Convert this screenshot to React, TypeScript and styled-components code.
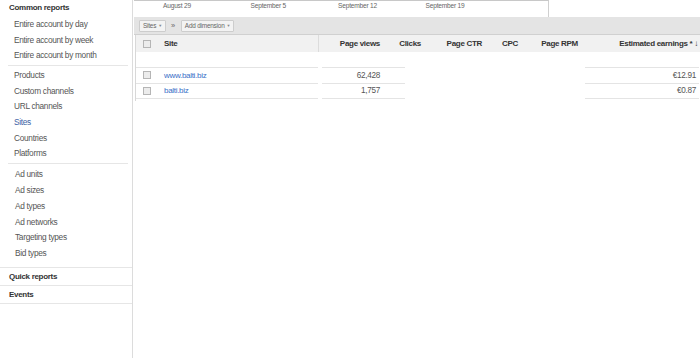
import styled, { createGlobalStyle } from "styled-components";

const GlobalStyle = createGlobalStyle`
  html, body {
    margin: 0;
    padding: 0;
    background: #fff;
  }
  body {
    font-family: "Liberation Sans", Arial, sans-serif;
    font-size: 8.3px;
    letter-spacing: -0.3px;
    color: #555;
  }
`;

type NavGroup = { items: string[] };

const groups: NavGroup[] = [
  { items: ["Entire account by day", "Entire account by week", "Entire account by month"] },
  { items: ["Products", "Custom channels", "URL channels", "Sites", "Countries", "Platforms"] },
  { items: ["Ad units", "Ad sizes", "Ad types", "Ad networks", "Targeting types", "Bid types"] },
];

const rows = [
  { site: "www.balti.biz", views: "62,428", earnings: "€12.91" },
  { site: "balti.biz", views: "1,757", earnings: "€0.87" },
];

const dates = ["August 29", "September 5", "September 12", "September 19"];

const COLS = "22px 161px 67px 41px 61px 36px 60px 1fr";

export default function App() {
  return (
    <>
      <GlobalStyle />
      <Page>
        <Sidebar>
          <SectionTitle>Common reports</SectionTitle>
          {groups.map((g, i) => (
            <NavList key={i} $first={i === 0} $last={i === groups.length - 1}>
              {g.items.map((item) => (
                <NavItem key={item} $active={item === "Sites"} $loose={i === groups.length - 1}>
                  {item}
                </NavItem>
              ))}
            </NavList>
          ))}
          <SectionRow>Quick reports</SectionRow>
          <SectionRow>Events</SectionRow>
        </Sidebar>

        <Main>
          <Axis>
            {dates.map((d) => (
              <AxisLabel key={d}>{d}</AxisLabel>
            ))}
          </Axis>

          <Toolbar>
            <DropButton>
              Sites <Caret>▼</Caret>
            </DropButton>
            <Chevron>»</Chevron>
            <DropButton>
              Add dimension <Caret>▼</Caret>
            </DropButton>
          </Toolbar>

          <Table>
            <HeaderRow>
              <HeadCell>
                <Check />
              </HeadCell>
              <HeadCell $divider>Site</HeadCell>
              <HeadCell $right>Page views</HeadCell>
              <HeadCell $right>Clicks</HeadCell>
              <HeadCell $right>Page CTR</HeadCell>
              <HeadCell $right>CPC</HeadCell>
              <HeadCell $right>Page RPM</HeadCell>
              <HeadCell $right $pad={4}>
                Estimated earnings * ↓
              </HeadCell>
            </HeaderRow>

            <BodyRow $tall>
              <Cell $rule />
              <Cell $rule $trimRight={1} />
              <Cell $rule $trimLeft={3} />
              <Cell $rule $trimRight={22} />
              <Cell />
              <Cell />
              <Cell />
              <Cell $rule $trimLeft={1} $trimRight={3} />
            </BodyRow>

            {rows.map((r) => (
              <BodyRow key={r.site}>
                <Cell $rule>
                  <Check />
                </Cell>
                <Cell $rule $trimRight={1}>
                  <SiteLink href="#">{r.site}</SiteLink>
                </Cell>
                <Cell $rule $right $trimLeft={3}>
                  {r.views}
                </Cell>
                <Cell $rule $trimRight={22} />
                <Cell />
                <Cell />
                <Cell />
                <Cell $rule $right $pad={3} $trimLeft={1} $trimRight={3}>
                  {r.earnings}
                </Cell>
              </BodyRow>
            ))}
          </Table>
        </Main>
      </Page>
    </>
  );
}

const Page = styled.div`
  display: flex;
  width: 700px;
  height: 358px;
  overflow: hidden;
`;

const Sidebar = styled.nav`
  width: 132px;
  flex-shrink: 0;
  border-right: 1px solid #dcdcdc;
  display: flex;
  flex-direction: column;
`;

const SectionTitle = styled.div`
  font-weight: bold;
  font-size: 8px;
  color: #333;
  padding-left: 9px;
  height: 14px;
  line-height: 15px;
`;

const NavList = styled.ul<{ $first?: boolean; $last?: boolean }>`
  list-style: none;
  margin: 0 ${(p) => (p.$last ? "0" : "4px")} 0 ${(p) => (p.$last ? "0" : "8px")};
  padding: ${(p) => (p.$first || p.$last ? "3px" : "2px")} 0
    ${(p) => (p.$last ? "5px" : "1.4px")} ${(p) => (p.$last ? "15px" : "6px")};
  border-bottom: 1px solid #e6e6e6;
`;

const NavItem = styled.li<{ $active?: boolean; $loose?: boolean }>`
  height: ${(p) => (p.$loose ? "15.8px" : "15.6px")};
  line-height: ${(p) => (p.$loose ? "15.8px" : "15.6px")};
  color: ${(p) => (p.$active ? "#3c5fa5" : "#555")};
`;

const SectionRow = styled.div`
  font-weight: bold;
  font-size: 8px;
  color: #333;
  padding-left: 9px;
  height: 17px;
  line-height: 17px;
  border-bottom: 1px solid #e6e6e6;
`;

const Main = styled.main`
  flex: 1;
  display: flex;
  flex-direction: column;
  padding-left: 1px;
`;

const Axis = styled.div`
  width: 415px;
  height: 17px;
  border-top: 1px solid #c8c8c8;
  border-right: 1px solid #d0d0d0;
  box-sizing: border-box;
  display: flex;
  padding-left: 29px;
`;

const AxisLabel = styled.span`
  width: 87.5px;
  font-size: 6.6px;
  letter-spacing: -0.2px;
  line-height: 10px;
  color: #666;
`;

const Toolbar = styled.div`
  height: 17px;
  background: #e4e4e4;
  border-bottom: 1px solid #d0d0d0;
  display: flex;
  align-items: center;
  padding-left: 5px;
  gap: 4px;
`;

const DropButton = styled.span`
  height: 10px;
  line-height: 10px;
  padding: 0 3px;
  background: #f3f3f3;
  border: 1px solid #cdcdcd;
  border-radius: 1px;
  font-size: 6.4px;
  letter-spacing: -0.2px;
  color: #666;
  display: flex;
  align-items: center;
  gap: 2px;
`;

const Caret = styled.span`
  font-size: 4px;
  color: #888;
`;

const Chevron = styled.span`
  font-size: 7.5px;
  color: #666;
  padding: 0 2px 0 1px;
`;

const Table = styled.div`
  border-left: 1px solid #d8d8d8;
  margin-left: 1px;
  display: flex;
  flex-direction: column;
  padding-bottom: 2px;
  width: 100%;
`;

const HeaderRow = styled.div`
  display: grid;
  grid-template-columns: ${COLS};
  height: 17px;
  background: #f1f1f1;
`;

const HeadCell = styled.div<{ $right?: boolean; $divider?: boolean; $pad?: number }>`
  display: flex;
  align-items: center;
  justify-content: ${(p) => (p.$right ? "flex-end" : "flex-start")};
  padding: ${(p) => (p.$right ? `0 ${p.$pad ?? 6}px 0 0` : "0 0 0 6px")};
  font-weight: bold;
  font-size: 8px;
  color: #333;
  white-space: nowrap;
  border-right: ${(p) => (p.$divider ? "1px solid #dcdcdc" : "none")};
  &:first-child {
    padding-left: 7px;
  }
`;

const BodyRow = styled.div<{ $tall?: boolean }>`
  display: grid;
  grid-template-columns: ${COLS};
  height: ${(p) => (p.$tall ? "16px" : "15.5px")};
`;

const Cell = styled.div<{
  $rule?: boolean;
  $right?: boolean;
  $pad?: number;
  $trimLeft?: number;
  $trimRight?: number;
}>`
  display: flex;
  align-items: center;
  justify-content: ${(p) => (p.$right ? "flex-end" : "flex-start")};
  padding: ${(p) => (p.$right ? `0 ${p.$pad ?? 6}px 0 0` : "0 0 0 6px")};
  margin-left: ${(p) => p.$trimLeft ?? 0}px;
  margin-right: ${(p) => p.$trimRight ?? 0}px;
  border-bottom: ${(p) => (p.$rule ? "1px solid #e4e4e4" : "1px solid transparent")};
  font-size: 8.2px;
  color: #555;
  white-space: nowrap;
  &:first-child {
    padding-left: 7px;
  }
`;

const Check = styled.span`
  display: inline-block;
  width: 6px;
  height: 6px;
  border: 1px solid #b5b5b5;
  background: #ececec;
`;

const SiteLink = styled.a`
  color: #3a6fc7;
  text-decoration: none;
  font-size: 8px;
`;
